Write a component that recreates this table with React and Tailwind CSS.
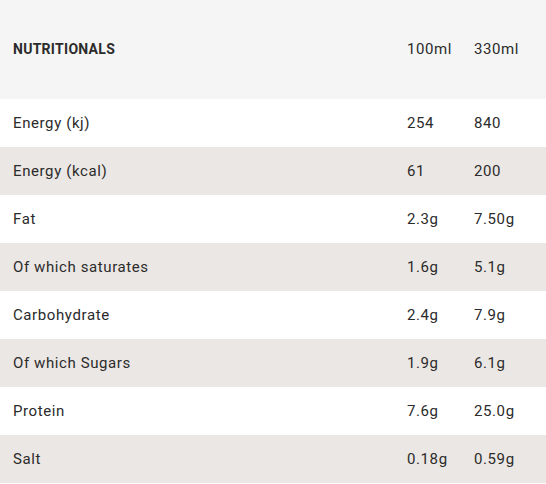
const rows = [
  ['Energy (kj)', '254', '840'],
  ['Energy (kcal)', '61', '200'],
  ['Fat', '2.3g', '7.50g'],
  ['Of which saturates', '1.6g', '5.1g'],
  ['Carbohydrate', '2.4g', '7.9g'],
  ['Of which Sugars', '1.9g', '6.1g'],
  ['Protein', '7.6g', '25.0g'],
  ['Salt', '0.18g', '0.59g'],
];

export default function App() {
  return (
    <div className="w-[546px] bg-white text-[15px] tracking-[0.04em] text-[#2b2b2b] font-['Roboto',sans-serif]">
      {/* Header */}
      <div className="grid grid-cols-[394px_67px_1fr] items-center h-[99px] pl-[13px] bg-[#f5f5f5]">
        <span className="font-bold text-[14px] tracking-[0.02em]">NUTRITIONALS</span>
        <span>100ml</span>
        <span>330ml</span>
      </div>

      {rows.map(([label, a, b], i) => (
        <div
          key={label}
          className={`grid grid-cols-[394px_67px_1fr] items-center h-12 pl-[13px] ${
            i % 2 === 1 ? 'bg-[#ebe7e4]' : 'bg-white'
          }`}
        >
          <span>{label}</span>
          <span>{a}</span>
          <span>{b}</span>
        </div>
      ))}
    </div>
  );
}
